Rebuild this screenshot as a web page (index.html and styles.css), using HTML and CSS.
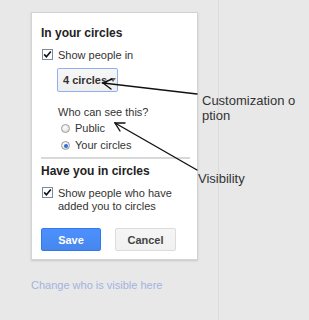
FILE: index.html
```html
<!DOCTYPE html>
<html lang="en">
<head>
    <meta charset="UTF-8">
    <meta name="viewport" content="width=device-width, initial-scale=1.0">
    <title>Circles visibility</title>
    <link rel="stylesheet" href="styles.css">
</head>
<body>
    <div class="page">
        <div class="main">
            <div class="panel">
                <h3 class="heading">In your circles</h3>

                <div class="check-row">
                    <span class="checkbox">
                        <svg width="11" height="11" viewBox="0 0 11 11"><path d="M2.2 5.4 L4.4 7.8 L8.8 2.4" fill="none" stroke="#111" stroke-width="1.6"/></svg>
                    </span>
                    <span class="check-label">Show people in</span>
                </div>

                <div class="circles-select"><span class="select-text">4 circles</span><span class="caret"></span></div>

                <div class="visibility">
                    <div class="question">Who can see this?</div>
                    <label class="radio-row"><span class="radio"></span>Public</label>
                    <label class="radio-row"><span class="radio checked"></span>Your circles</label>
                </div>

                <div class="divider"></div>

                <h3 class="heading heading-second">Have you in circles</h3>

                <div class="check-row check-row-second">
                    <span class="checkbox">
                        <svg width="11" height="11" viewBox="0 0 11 11"><path d="M2.2 5.4 L4.4 7.8 L8.8 2.4" fill="none" stroke="#111" stroke-width="1.6"/></svg>
                    </span>
                    <span class="check-label">Show people who have added you to circles</span>
                </div>

                <div class="actions">
                    <button class="btn btn-save">Save</button>
                    <button class="btn btn-cancel">Cancel</button>
                </div>
            </div>

            <a class="change-link" href="#">Change who is visible here</a>
        </div>
    </div>

    <!-- annotations drawn over the screenshot -->
    <div class="note note-custom">Customization o<br>ption</div>
    <div class="note note-visibility">Visibility</div>

    <svg class="arrows" width="309" height="320" viewBox="0 0 309 320">
        <g fill="none" stroke="#111" stroke-width="1.4" stroke-linecap="round">
            <path d="M197 94 L103 83"/>
            <path d="M111 89 L103 83 L112 79"/>
            <path d="M197 170 L115 123"/>
            <path d="M120 131 L115 123 L125 123"/>
        </g>
    </svg>
</body>
</html>
```

FILE: styles.css
```css
body {
    margin: 0;
    background: #e8e8e8;
    font-family: "Liberation Sans", Arial, sans-serif;
    font-size: 11px;
    color: #333;
    width: 309px;
    height: 320px;
    position: relative;
    overflow: hidden;
}
.page {
    display: flex;
    height: 320px;
}
.main {
    width: 219px;
    box-sizing: border-box;
    border-right: 1px solid #dcdcdc;
    height: 320px;
}
.panel {
    margin: 12px 0 0 31px;
    width: 167px;
    box-sizing: border-box;
    background: #fff;
    border: 1px solid #d4d4d4;
    box-shadow: 0 1px 2px rgba(0,0,0,0.15);
    padding: 13px 7px 8px 9px;
}
.heading {
    margin: 0;
    font-size: 12px;
    line-height: 14px;
    font-weight: bold;
    color: #222;
}
.heading-second {
    margin-top: 5px;
}
.check-row {
    display: flex;
    align-items: flex-start;
    margin-top: 9px;
    line-height: 13px;
}
.check-row-second {
    margin-top: 9px;
}
.checkbox {
    width: 11px;
    height: 11px;
    box-sizing: border-box;
    border: 1px solid #7a8aa0;
    background: #fff;
    margin-left: 1px;
    margin-right: 5px;
    flex: none;
    position: relative;
}
.checkbox svg {
    position: absolute;
    left: -1px;
    top: -1px;
}
.check-label {
    color: #333;
}
.circles-select {
    display: flex;
    align-items: center;
    margin: 6px 0 0 16px;
    width: 61px;
    height: 24px;
    box-sizing: border-box;
    padding: 0 0 0 5px;
    border: 1px solid #8fb0f0;
    border-radius: 2px;
    background: linear-gradient(#f7f7f7, #eeeeee);
    font-size: 11px;
    font-weight: bold;
    color: #333;
    white-space: nowrap;
}
.caret {
    display: inline-block;
    margin-left: 3px;
    width: 0;
    height: 0;
    border-left: 3px solid transparent;
    border-right: 3px solid transparent;
    border-top: 4px solid #666;
    flex: none;
}
.visibility {
    margin: 14px 0 0 17px;
}
.question {
    line-height: 13px;
}
.radio-row {
    display: flex;
    align-items: center;
    line-height: 17px;
    margin-left: 3px;
}
.radio-row:first-of-type {
    margin-top: 1px;
}
.radio {
    width: 9px;
    height: 9px;
    box-sizing: border-box;
    border-radius: 50%;
    border: 1px solid #9a9a9a;
    background: radial-gradient(circle at 40% 35%, #ffffff, #d6d6d6);
    margin-right: 5px;
    position: relative;
    flex: none;
}
.radio.checked::after {
    content: "";
    position: absolute;
    left: 1.5px;
    top: 1.5px;
    width: 4px;
    height: 4px;
    border-radius: 50%;
    background: #2f6fd6;
}
.divider {
    height: 2px;
    background: #d8d8d8;
    margin-top: 3px;
}
.actions {
    display: flex;
    gap: 14px;
    margin-top: 15px;
}
.btn {
    height: 23px;
    box-sizing: border-box;
    border-radius: 2px;
    font-family: inherit;
    font-size: 11px;
    font-weight: bold;
    padding: 0;
}
.btn-save {
    width: 60px;
    background: linear-gradient(#4d90fe, #4787ed);
    border: 1px solid #3079ed;
    color: #fff;
}
.btn-cancel {
    width: 61px;
    background: linear-gradient(#f5f5f5, #f1f1f1);
    border: 1px solid #dcdcdc;
    color: #444;
}
.change-link {
    display: block;
    margin: 19px 0 0 31px;
    color: #a3b3de;
    text-decoration: none;
    line-height: 13px;
}
.note {
    position: absolute;
    font-size: 13px;
    line-height: 15px;
    color: #333;
}
.note-custom {
    left: 202px;
    top: 93px;
}
.note-visibility {
    left: 198px;
    top: 171px;
}
.arrows {
    position: absolute;
    left: 0;
    top: 0;
    pointer-events: none;
}
```
